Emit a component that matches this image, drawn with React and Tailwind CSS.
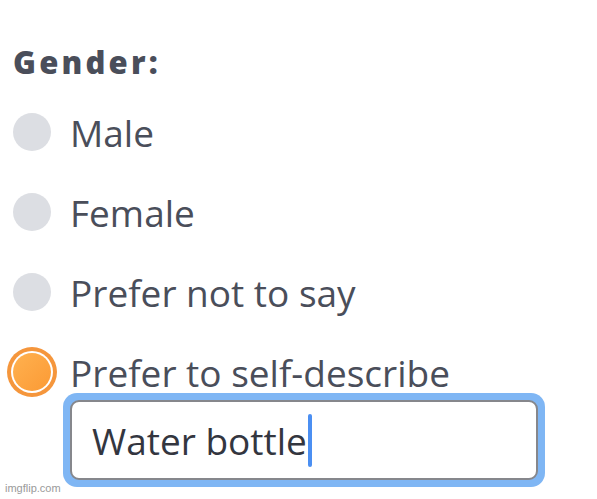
const options = ["Male", "Female", "Prefer not to say", "Prefer to self-describe"];

function Radio({ checked }) {
  if (checked) {
    return (
      <span className="flex h-[50px] w-[50px] shrink-0 items-center justify-center rounded-full bg-[#f5963c] -ml-[6px] -mr-[6px]">
        <span className="flex h-[42px] w-[42px] items-center justify-center rounded-full bg-white">
          <span className="h-[38px] w-[38px] rounded-full bg-gradient-to-br from-[#ffb14f] to-[#fb9a34]" />
        </span>
      </span>
    );
  }
  return <span className="h-[38px] w-[38px] shrink-0 rounded-full bg-[#dcdee3]" />;
}

export default function App() {
  return (
    <div className="relative h-[499px] w-[597px] bg-white pl-[13px] pt-[47px] text-[#4a4e5a] font-['Open_Sans',sans-serif]">
      <div className="text-[31px] font-extrabold leading-none tracking-[3.2px]">Gender:</div>
      <div className="mt-[14px] flex flex-col">
        {options.map((o, i) => (
          <label key={o} className="flex h-[80px] items-center gap-[19px]">
            <Radio checked={i === 3} />
            <span className="text-[37px] leading-none">{o}</span>
          </label>
        ))}
      </div>
      <div className="-mt-[19px] ml-[50px] h-[94px] w-[482px] rounded-[14px] bg-[#7fb6f4] p-[7px]">
        <div className="flex h-full items-center rounded-[9px] border-2 border-[#86878c] bg-white pl-[20px]">
          <span className="text-[37px] leading-none text-[#33363f]">Water bottle</span>
          <span className="ml-[1px] h-[53px] w-[4px] rounded-full bg-[#4b8ff2]" />
        </div>
      </div>
      <div className="absolute bottom-[3px] left-[5px] text-[11px] text-[#9a9a9a] font-['Liberation_Sans',sans-serif]">imgflip.com</div>
    </div>
  );
}
